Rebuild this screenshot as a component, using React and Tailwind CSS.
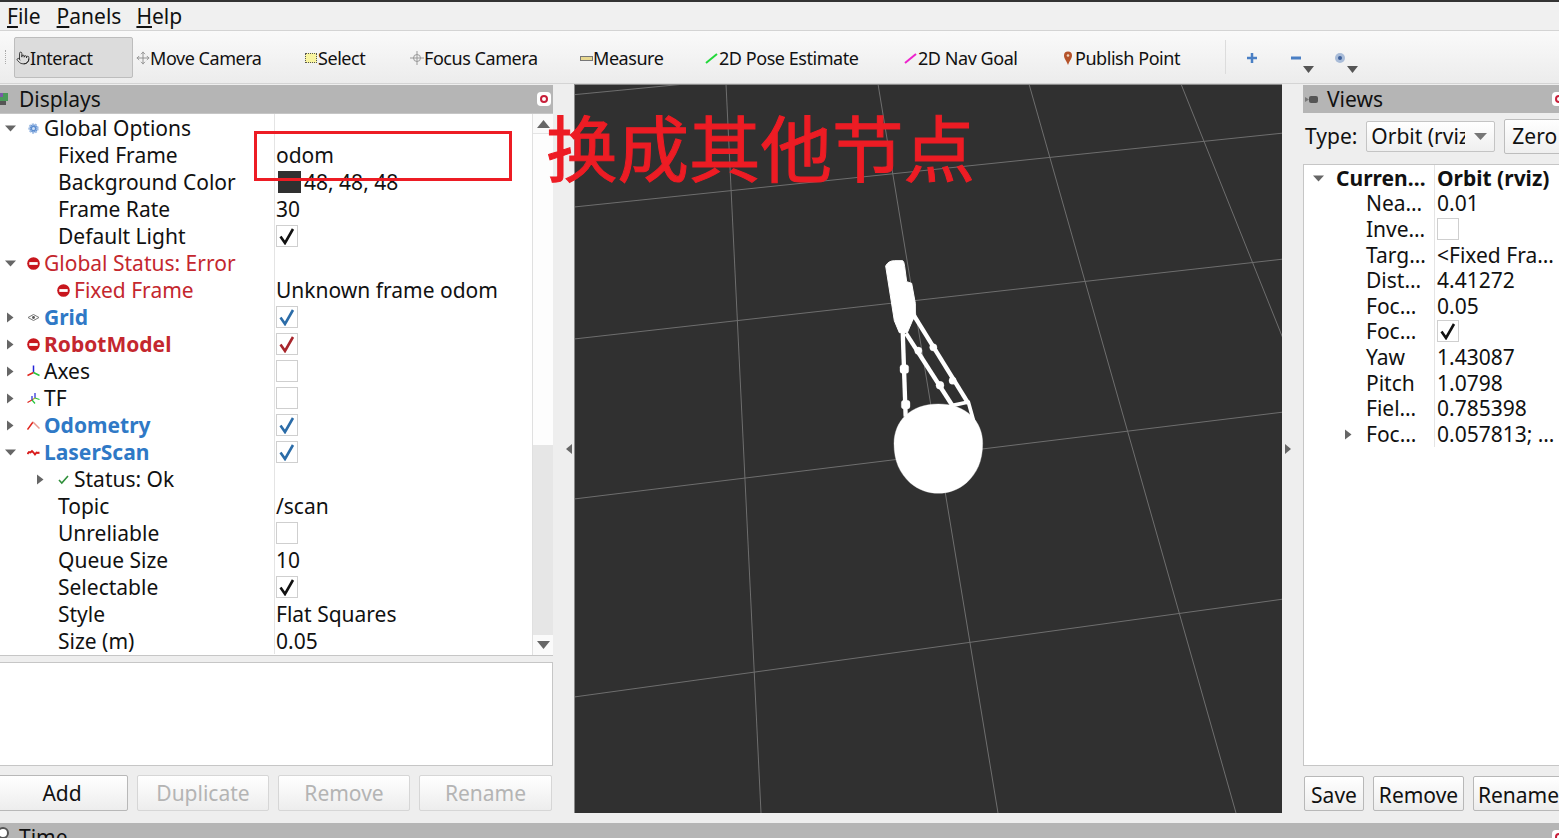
import { Pointer, Move } from "lucide-react";

const Arrow = ({ dir }) => (
  <svg width="13" height="13" viewBox="0 0 13 13" className="shrink-0">
    {dir === "down" ? <path d="M1 3.500h11l-5.500 6z" fill="#666" /> : <path d="M3 1.500v10l6.500-5z" fill="#666" />}
  </svg>
);

const StopIcon = () => (
  <svg width="13" height="13" viewBox="0 0 13 13">
    <circle cx="6.500" cy="6.500" r="6.300" fill="#c8161d" />
    <rect x="2.300" y="5.100" width="8.400" height="2.800" fill="#fff" />
  </svg>
);

const GearIcon = () => (
  <svg width="13" height="13" viewBox="0 0 13 13">
    <circle cx="6.500" cy="6.500" r="4" fill="#5b8ccf" stroke="#9dbbe4" strokeWidth="2.400" strokeDasharray="1.800 1" />
    <circle cx="6.500" cy="6.500" r="1.500" fill="#cfe0f5" />
  </svg>
);

const EyeIcon = () => (
  <svg width="13" height="13" viewBox="0 0 13 13">
    <path d="M1 6.500 6.500 3.500l5.500 3-5.500 3z" fill="none" stroke="#777" strokeWidth="1" />
    <circle cx="6.500" cy="6.500" r="1.400" fill="#555" />
  </svg>
);

const AxesIcon = () => (
  <svg width="13" height="13" viewBox="0 0 13 13" fill="none" strokeWidth="1.500">
    <path d="M6.500 7.500V0.500" stroke="#2323d8" />
    <path d="M6.500 7.500 0.500 10.500" stroke="#e0241c" />
    <path d="M6.500 7.500l6 3" stroke="#27c43a" />
  </svg>
);

const TfIcon = () => (
  <svg width="13" height="13" viewBox="0 0 13 13" fill="none" strokeWidth="1.200">
    <path d="M8 6V1" stroke="#2323d8" />
    <path d="M8 6l4.500 1.500" stroke="#27c43a" />
    <path d="M8 6 5 8" stroke="#b0b020" />
    <path d="M5 8V4" stroke="#2323d8" />
    <path d="M5 8 0.500 10.500" stroke="#e0241c" />
    <path d="M5 8l3 3.500" stroke="#27c43a" />
  </svg>
);

const OdomIcon = () => (
  <svg width="13" height="13" viewBox="0 0 13 13" fill="none">
    <path d="M0.500 10.500 6 3" stroke="#e0241c" strokeWidth="1.500" />
    <path d="M6 3l6.500 6.500" stroke="#e89a90" strokeWidth="1.500" />
  </svg>
);

const LaserIcon = () => (
  <svg width="13" height="13" viewBox="0 0 13 13" fill="none">
    <path d="M0.500 8 2 6l1.500.5L5 5l1.500 1.500L8 8.500l1.500-2 1.500.5 1.500-.5" stroke="#d81a1a" strokeWidth="1.900" />
  </svg>
);

const OkIcon = () => (
  <svg width="13" height="13" viewBox="0 0 13 13" fill="none">
    <path d="M2 7l2.800 3L11 3" stroke="#2f8f3a" strokeWidth="1.600" />
  </svg>
);

const ICONS = {
  gear: GearIcon,
  stop: StopIcon,
  eye: EyeIcon,
  axes: AxesIcon,
  tf: TfIcon,
  odom: OdomIcon,
  laser: LaserIcon,
  ok: OkIcon,
};

const CloseIcon = () => (
  <span className="flex h-[14px] w-[14px] shrink-0 items-center justify-center rounded-sm bg-white">
    <span className="h-[8px] w-[8px] rounded-full border-[2.5px] border-[#c8203a]" />
  </span>
);

const CheckBox = ({ mark }) => (
  <span className="flex h-[22px] w-[22px] items-center justify-center border border-[#cfcfcf] bg-white">
    {mark && (
      <svg width="18" height="18" viewBox="0 0 18 18" fill="none">
        <path d="M2.500 9.500 7 16 15 2" stroke={mark} strokeWidth="2.600" />
      </svg>
    )}
  </span>
);

const DISPLAY_ROWS = [
  { label: "Global Options", pad: "pl-[4px]", arrow: "down", icon: "gear" },
  { label: "Fixed Frame", pad: "pl-[58px]", value: "odom" },
  { label: "Background Color", pad: "pl-[58px]", value: "48, 48, 48", swatch: true },
  { label: "Frame Rate", pad: "pl-[58px]", value: "30" },
  { label: "Default Light", pad: "pl-[58px]", check: "#111" },
  { label: "Global Status: Error", pad: "pl-[4px]", arrow: "down", icon: "stop", tone: "text-[#c4272e]" },
  { label: "Fixed Frame", pad: "pl-[57px]", icon: "stop", tone: "text-[#c4272e]", value: "Unknown frame odom" },
  { label: "Grid", pad: "pl-[4px]", arrow: "right", icon: "eye", tone: "font-bold text-[#2f79c6]", check: "#2b6ca8" },
  { label: "RobotModel", pad: "pl-[4px]", arrow: "right", icon: "stop", tone: "font-bold text-[#c4272e]", check: "#a8262c" },
  { label: "Axes", pad: "pl-[4px]", arrow: "right", icon: "axes", check: "" },
  { label: "TF", pad: "pl-[4px]", arrow: "right", icon: "tf", check: "" },
  { label: "Odometry", pad: "pl-[4px]", arrow: "right", icon: "odom", tone: "font-bold text-[#2f79c6]", check: "#2b6ca8" },
  { label: "LaserScan", pad: "pl-[4px]", arrow: "down", icon: "laser", tone: "font-bold text-[#2f79c6]", check: "#2b6ca8" },
  { label: "Status: Ok", pad: "pl-[34px]", arrow: "right", icon: "ok" },
  { label: "Topic", pad: "pl-[58px]", value: "/scan" },
  { label: "Unreliable", pad: "pl-[58px]", check: "" },
  { label: "Queue Size", pad: "pl-[58px]", value: "10" },
  { label: "Selectable", pad: "pl-[58px]", check: "#111" },
  { label: "Style", pad: "pl-[58px]", value: "Flat Squares" },
  { label: "Size (m)", pad: "pl-[58px]", value: "0.05" },
];

const VIEW_ROWS = [
  { label: "Curren…", value: "Orbit (rviz)", bold: true, arrow: "down", pad: "pl-[8px]" },
  { label: "Nea…", value: "0.01", pad: "pl-[62px]" },
  { label: "Inve…", check: "", pad: "pl-[62px]" },
  { label: "Targ…", value: "<Fixed Fra…", pad: "pl-[62px]" },
  { label: "Dist…", value: "4.41272", pad: "pl-[62px]" },
  { label: "Foc…", value: "0.05", pad: "pl-[62px]" },
  { label: "Foc…", check: "#111", pad: "pl-[62px]" },
  { label: "Yaw", value: "1.43087", pad: "pl-[62px]" },
  { label: "Pitch", value: "1.0798", pad: "pl-[62px]" },
  { label: "Fiel…", value: "0.785398", pad: "pl-[62px]" },
  { label: "Foc…", value: "0.057813; …", arrow: "right", pad: "pl-[38px]" },
];

function DisplayRow({ row }) {
  const Icon = ICONS[row.icon];
  return (
    <div className="flex h-[27px] items-center whitespace-nowrap">
      <div className={`flex h-full w-[275px] shrink-0 items-center border-r border-[#e4e4e4] pt-[1px] ${row.pad} ${row.tone || ""}`}>
        {row.arrow && (
          <span className="mr-[10px] flex">
            <Arrow dir={row.arrow} />
          </span>
        )}
        {Icon && (
          <span className="mr-[4px] flex">
            <Icon />
          </span>
        )}
        {row.label}
      </div>
      <div className={`flex items-center pl-[1px] ${row.check === undefined ? "pt-[1px]" : ""}`}>
        {row.swatch && <span className="ml-[2px] mr-[3px] h-[22px] w-[23px] bg-[#303030]" />}
        {row.value}
        {row.check !== undefined && <CheckBox mark={row.check} />}
      </div>
    </div>
  );
}

function ViewRow({ row }) {
  return (
    <div className={`flex h-[25.6px] items-center whitespace-nowrap ${row.bold ? "font-bold" : ""}`}>
      <div className={`flex h-full w-[131px] shrink-0 items-center border-r border-[#e4e4e4] pt-[1px] ${row.pad}`}>
        {row.arrow && (
          <span className="mr-[11px] flex">
            <Arrow dir={row.arrow} />
          </span>
        )}
        {row.label}
      </div>
      <div className={`flex items-center pl-[2px] ${row.check === undefined ? "pt-[1px]" : ""}`}>
        {row.value}
        {row.check !== undefined && <CheckBox mark={row.check} />}
      </div>
    </div>
  );
}

function PanelButton({ children, width, disabled }) {
  return (
    <button
      className={`flex h-[36px] shrink-0 items-center justify-center rounded-[2px] border bg-gradient-to-b from-white to-[#ededed] ${width} ${
        disabled ? "border-[#d6d6d6] text-[#b4b4b4]" : "border-[#b8b8b8] text-[#111]"
      }`}
    >
      {children}
    </button>
  );
}

function ToolButton({ icon, label, width }) {
  return (
    <div className={`flex items-center pt-[2px] ${width}`}>
      <span className="flex h-[14px] w-[14px] shrink-0 items-center justify-center">{icon}</span>
      {label}
    </div>
  );
}

function Viewport() {
  return (
    <div className="h-[729px] w-[708px] shrink-0 border-l border-t border-[#8a8a8a] bg-[#303030]">
      <svg width="707" height="728" viewBox="1 1 707 728">
        <g stroke="#6e6e6e" strokeWidth="1" fill="none">
          <path d="M0 10.700 111 0" />
          <path d="M0 123 710 49" />
          <path d="M0 255 710 175" />
          <path d="M0 415 710 328" />
          <path d="M0 613 710 515" />
          <path d="M152 0 187 729" />
          <path d="M304 0 424 729" />
          <path d="M455 0 662 729" />
          <path d="M607 0 710 257" />
        </g>
        {/* robot silhouette, traced at 3x */}
        <g transform="translate(286 156) scale(0.3333)" fill="#fff" stroke="#fff" strokeLinejoin="round">
          <path d="M77 78Q85 62 104 62H128Q132 64 134 80L140 125 155 130 166 190V225L156 245 142 278H118L103 242z" strokeWidth="3" />
          <g fill="none" strokeWidth="13">
            <path d="M128 270 137 530" />
            <path d="M138 280 278 498" />
            <path d="M158 220 325 490" />
            <path d="M275 497 325 486 347 565" strokeWidth="11" />
          </g>
          <rect x="120" y="374" width="26" height="26" rx="8" />
          <rect x="124" y="481" width="26" height="26" rx="8" />
          <circle cx="175" cy="332" r="11" />
          <circle cx="240" cy="436" r="12" />
          <circle cx="220" cy="322" r="11" />
          <circle cx="278" cy="422" r="11" />
          <path d="M102 610C102 545 150 492 235 492 320 492 368 545 368 610 368 665 350 700 320 728 295 750 265 760 235 760 205 760 175 750 150 728 120 700 102 665 102 610z" />
        </g>
      </svg>
    </div>
  );
}

export default function App() {
  return (
    <div className="relative h-[838px] w-[1559px] overflow-hidden bg-[#eeeeee] font-['Noto_Sans',sans-serif] text-[21px] leading-none text-[#111]">
      <div className="h-[2px] bg-[#333]" />

      {/* menu bar */}
      <div className="flex h-[28px] items-center bg-[#f0f0f0] pl-[7px] text-[21px]">
        <span className="mr-[16px]"><u>F</u>ile</span>
        <span className="mr-[15px]"><u>P</u>anels</span>
        <span><u>H</u>elp</span>
      </div>

      {/* toolbar */}
      <div className="flex h-[54px] items-center border-y border-[#d4d4d4] bg-gradient-to-b from-[#fafafa] to-[#ececec] text-[18px] tracking-[-0.45px]">
        <div className="ml-[5px] mr-[8px] h-[14px] w-[1px] border-l border-dotted border-[#aaa]" />
        <div className="flex h-[41px] w-[119px] items-center rounded-[2px] border border-[#bdbdbd] bg-[#dcdcdc] pl-[1px] pt-[2px]">
          <span className="flex w-[14px] justify-center">
            <Pointer size={14} strokeWidth={1.3} />
          </span>
          Interact
        </div>
        <div className="w-[3px]" />
        <ToolButton width="w-[168px]" label="Move Camera" icon={<Move size={14} strokeWidth={1.5} color="#888" />} />
        <ToolButton
          width="w-[106px]"
          label="Select"
          icon={<span className="h-[10px] w-[12px] border border-dotted border-[#555] bg-[#f8f4a0]" />}
        />
        <ToolButton
          width="w-[169px]"
          label="Focus Camera"
          icon={
            <svg width="14" height="14" viewBox="0 0 14 14" fill="none" stroke="#999">
              <circle cx="7" cy="7" r="3.500" />
              <path d="M7 0v14M0 7h14" />
            </svg>
          }
        />
        <ToolButton
          width="w-[126px]"
          label="Measure"
          icon={<span className="h-[5px] w-[13px] border border-[#777] bg-[#e8d890]" />}
        />
        <ToolButton
          width="w-[199px]"
          label="2D Pose Estimate"
          icon={
            <svg width="14" height="14" viewBox="0 0 14 14" fill="none">
              <path d="M1 12 12 3" stroke="#22d83a" strokeWidth="2" />
            </svg>
          }
        />
        <ToolButton
          width="w-[157px]"
          label="2D Nav Goal"
          icon={
            <svg width="14" height="14" viewBox="0 0 14 14" fill="none">
              <path d="M1 12 12 3" stroke="#ee22cc" strokeWidth="2" />
            </svg>
          }
        />
        <ToolButton
          width="w-[164px]"
          label="Publish Point"
          icon={
            <svg width="10" height="14" viewBox="0 0 10 14">
              <path d="M5 14C3 9 1 7.500 1 4.500a4 4 0 0 1 8 0C9 7.500 7 9 5 14z" fill="#b5532a" />
              <circle cx="5" cy="4.500" r="1.300" fill="#f1d6c0" />
            </svg>
          }
        />
        <div className="h-[34px] w-[1px] bg-[#dcdcdc]" />
        <svg width="150" height="40" viewBox="0 0 150 40" className="ml-[1px]">
          <path d="M25 16v10M20 21h10" stroke="#4a7fc4" strokeWidth="2.500" />
          <path d="M64 21h10" stroke="#4a7fc4" strokeWidth="3" />
          <path d="M76 29h11l-5.500 7z" fill="#555" />
          <circle cx="113" cy="21" r="5" fill="#a9bcd8" />
          <circle cx="113" cy="21" r="2" fill="#3d5f9a" />
          <path d="M120 29h11l-5.500 7z" fill="#555" />
        </svg>
      </div>

      <div className="flex h-[739px]">
        {/* Displays panel */}
        <div className="flex w-[553px] shrink-0 flex-col pt-[1px]">
          <div className="flex h-[28px] items-center justify-between bg-[#b5b5b5] pr-[2px]">
            <div className="flex items-center">
              <svg width="12" height="13" viewBox="0 0 12 13" className="ml-[-3px] mr-[10px]">
                <rect x="1" y="0" width="10" height="8" fill="#4a9a5a" />
                <rect x="1" y="0" width="5" height="4" fill="#7a5aa8" />
                <rect x="3" y="8" width="6" height="4" fill="#555" />
              </svg>
              Displays
            </div>
            <CloseIcon />
          </div>
          <div className="flex h-[543px] border-y border-[#c6c6c6] bg-white">
            <div className="w-[532px] overflow-hidden">
              {DISPLAY_ROWS.map((row, i) => (
                <DisplayRow key={i} row={row} />
              ))}
            </div>
            <div className="flex w-[21px] shrink-0 flex-col border-l border-[#e0e0e0]">
              <div className="flex h-[20px] items-center justify-center border-b border-[#e4e4e4] bg-[#fafafa]">
                <svg width="13" height="8" viewBox="0 0 13 8"><path d="M0 8h13L6.500 0z" fill="#666" /></svg>
              </div>
              <div className="h-[311px] bg-[#fdfdfd]" />
              <div className="flex-1 bg-[#e6e6e6]" />
              <div className="flex h-[20px] items-center justify-center bg-[#fafafa]">
                <svg width="13" height="8" viewBox="0 0 13 8"><path d="M0 0h13L6.500 8z" fill="#666" /></svg>
              </div>
            </div>
          </div>
          <div className="mt-[6px] h-[104px] border-y border-r border-[#c6c6c6] bg-white" />
          <div className="mt-[9px] flex gap-[9px]">
            <div className="ml-[-4px]">
              <PanelButton width="w-[132px]">Add</PanelButton>
            </div>
            <PanelButton width="w-[132px]" disabled>Duplicate</PanelButton>
            <PanelButton width="w-[132px]" disabled>Remove</PanelButton>
            <PanelButton width="w-[133px]" disabled>Rename</PanelButton>
          </div>
        </div>

        {/* left splitter */}
        <div className="flex h-[729px] w-[21px] shrink-0 items-center justify-end pr-[2px]">
          <svg width="6" height="10" viewBox="0 0 6 10"><path d="M6 0v10L0 5z" fill="#666" /></svg>
        </div>

        <Viewport />

        {/* right splitter */}
        <div className="flex h-[729px] w-[21px] shrink-0 items-center pl-[3px]">
          <svg width="6" height="10" viewBox="0 0 6 10"><path d="M0 0v10l6-5z" fill="#666" /></svg>
        </div>

        {/* Views panel */}
        <div className="flex w-[300px] shrink-0 flex-col pt-[1px]">
          <div className="flex h-[28px] items-center bg-[#b5b5b5]">
            <svg width="13" height="9" viewBox="0 0 13 9" className="ml-[2px] mr-[9px]">
              <rect x="4" y="1" width="9" height="7" rx="2" fill="#555" />
              <path d="M0 2l4 2.500L0 7z" fill="#777" />
            </svg>
            Views
            <span className="ml-[169px] flex">
              <CloseIcon />
            </span>
          </div>
          <div className="mb-[4px] flex h-[47px] items-center">
            <span className="ml-[2px] mr-[9px]">Type:</span>
            <div className="flex h-[31px] w-[129px] items-center justify-between rounded-[2px] border border-[#c4c4c4] bg-gradient-to-b from-white to-[#efefef] px-[4px]">
              <span className="w-[94px] overflow-hidden whitespace-nowrap">Orbit (rviz</span>
              <svg width="13" height="7" viewBox="0 0 13 7" className="mr-[3px]"><path d="M0 0h13L6.500 7z" fill="#777" /></svg>
            </div>
            <div className="ml-[9px] flex h-[35px] w-[80px] items-center rounded-[2px] border border-[#bdbdbd] bg-gradient-to-b from-white to-[#efefef] pl-[7px]">
              Zero
            </div>
          </div>
          <div className="h-[602px] border border-[#c6c6c6] bg-white">
            {VIEW_ROWS.map((row, i) => (
              <ViewRow key={i} row={row} />
            ))}
          </div>
          <div className="mt-[10px] flex gap-[9px] [&>button]:pt-[3px]">
            <button className="ml-[1px] flex h-[35px] w-[60px] shrink-0 items-center justify-center rounded-[2px] border border-[#b8b8b8] bg-gradient-to-b from-white to-[#ededed]">Save</button>
            <button className="flex h-[35px] w-[91px] shrink-0 items-center justify-center rounded-[2px] border border-[#b8b8b8] bg-gradient-to-b from-white to-[#ededed]">Remove</button>
            <button className="flex h-[35px] w-[91px] shrink-0 items-center justify-center rounded-[2px] border border-[#b8b8b8] bg-gradient-to-b from-white to-[#ededed]">Rename</button>
          </div>
        </div>
      </div>

      {/* time panel, cut off by the window */}
      <div className="flex h-[15px] items-start bg-[#b5b5b5] pt-[4px]">
        <span className="ml-[-3px] mr-[10px] h-[12px] w-[12px] rounded-full border-2 border-[#555] bg-white" />
        Time
        <span className="ml-auto mr-[-7px] mt-[3px] flex">
          <CloseIcon />
        </span>
      </div>

      {/* annotation drawn over the screenshot */}
      <div className="absolute left-[254px] top-[131px] h-[50px] w-[258px] border-[3px] border-[#ed1c24]" />
      <div className="absolute left-[546px] top-[103px] whitespace-nowrap font-['Noto_Sans_CJK_SC',sans-serif] text-[71.5px] leading-[84px] text-[#ed1c24] [-webkit-text-stroke:1px_#ed1c24]">
        换成其他节点
      </div>
    </div>
  );
}
